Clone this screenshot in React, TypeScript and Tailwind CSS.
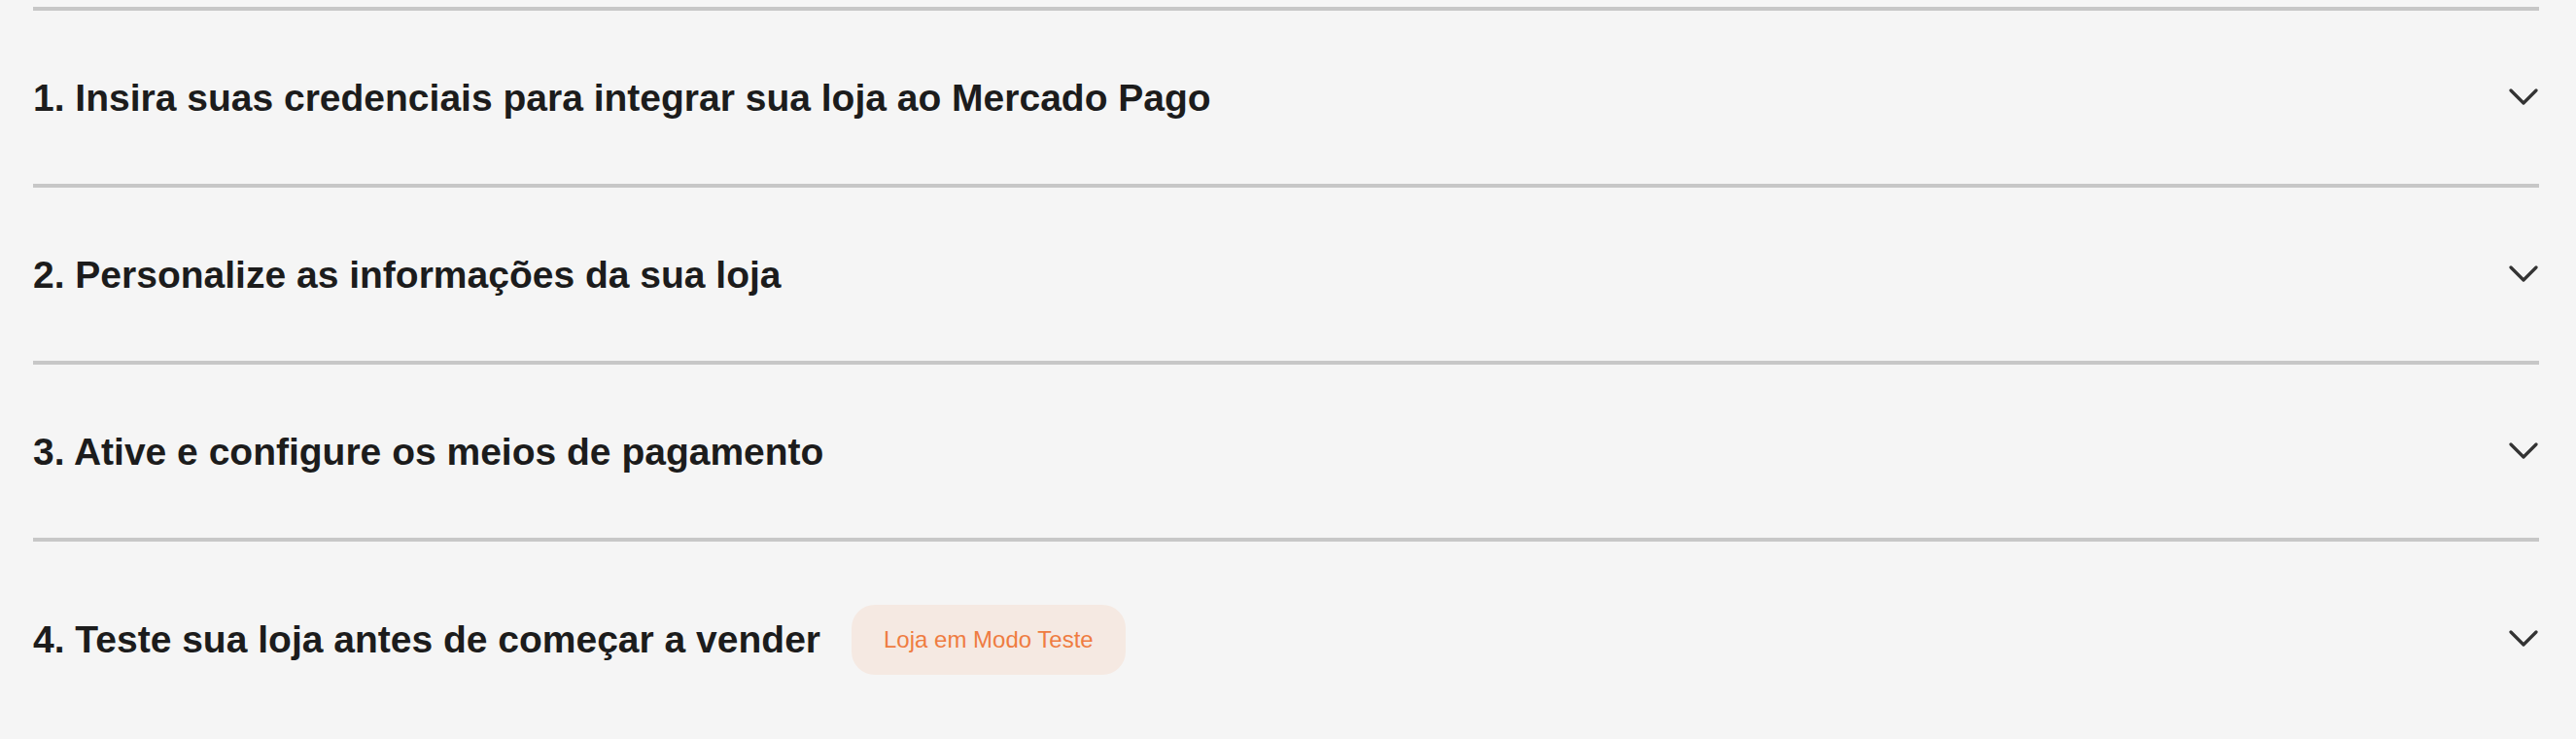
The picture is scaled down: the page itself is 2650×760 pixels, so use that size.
import React from 'react';

interface Step {
  id: number;
  title: string;
  badge?: string;
}

const steps: Step[] = [
  { id: 1, title: '1. Insira suas credenciais para integrar sua loja ao Mercado Pago' },
  { id: 2, title: '2. Personalize as informações da sua loja' },
  { id: 3, title: '3. Ative e configure os meios de pagamento' },
  { id: 4, title: '4. Teste sua loja antes de começar a vender', badge: 'Loja em Modo Teste' },
];

const ChevronDown = () => (
  <svg width="30" height="18" viewBox="0 0 30 18" fill="none" className="shrink-0">
    <polyline
      points="2,2 15,15 28,2"
      stroke="#333333"
      strokeWidth="3.2"
      strokeLinecap="round"
      strokeLinejoin="round"
    />
  </svg>
);

const App: React.FC = () => {
  return (
    <div
      className="w-full min-h-[760px] bg-[#f5f5f5] pt-[7px] pl-[34px] pr-[38px]"
      style={{ fontFamily: '"Liberation Sans", Arial, sans-serif' }}
    >
      {steps.map((step) => (
        <div key={step.id} className="border-t-4 border-[#c7c7c7]">
          <button className="w-full flex items-center justify-between pt-[65px] pb-[63px] text-left">
            <div className="flex items-center gap-[32px]">
              <span className="text-[39px] leading-[50px] font-bold text-[#1c1c1c]">
                {step.title}
              </span>
              {step.badge && (
                <span className="h-[72px] px-[33px] flex items-center rounded-[24px] bg-[#f5e9e2] text-[24px] text-[#ef7c41]">
                  {step.badge}
                </span>
              )}
            </div>
            <span className="mr-[1px] -mt-[2px]">
              <ChevronDown />
            </span>
          </button>
        </div>
      ))}
    </div>
  );
};

export default App;
